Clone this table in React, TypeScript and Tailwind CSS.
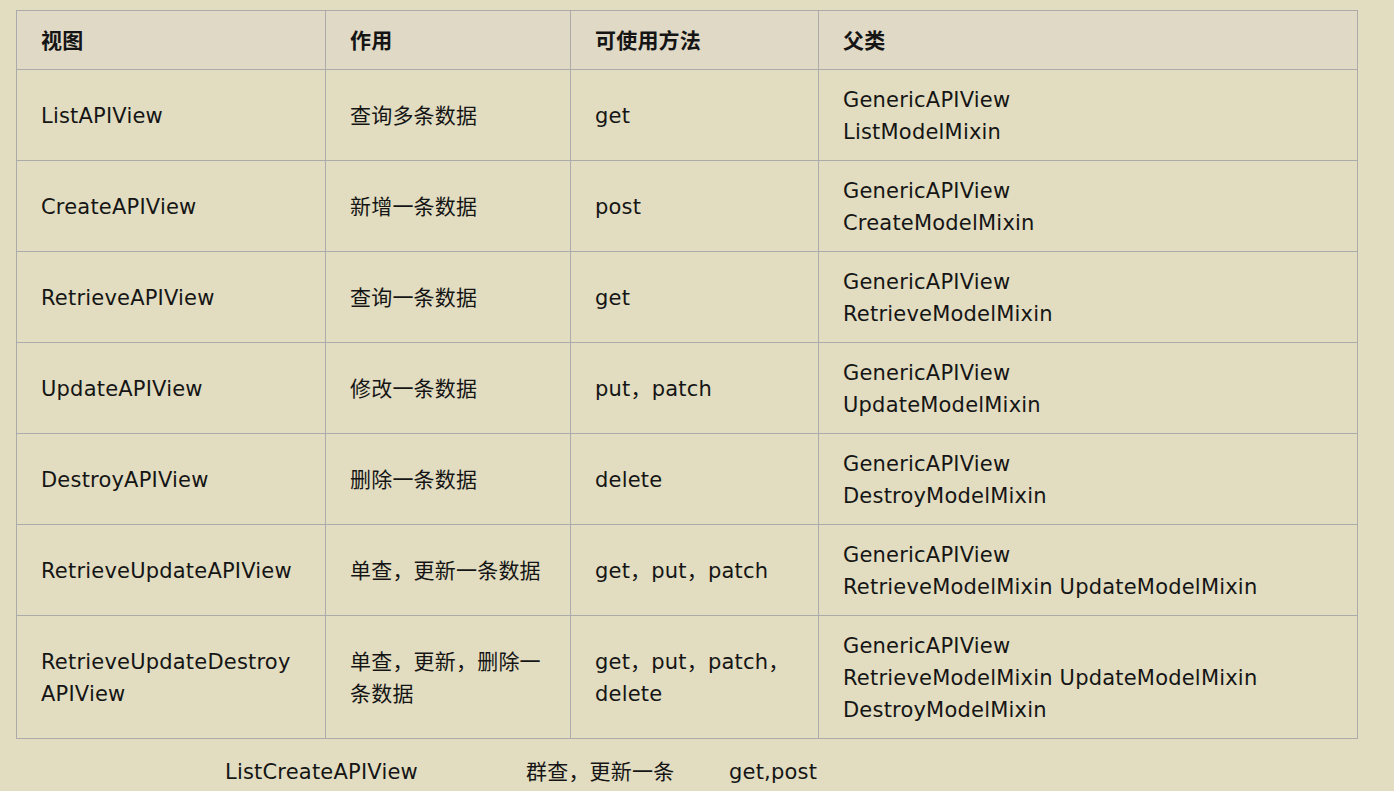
import React from "react";

type Row = { view: string[]; use: string[]; methods: string[]; parents: string[]; h: string };

const rows: Row[] = [
  { view: ["ListAPIView"], use: ["查询多条数据"], methods: ["get"], parents: ["GenericAPIView", "ListModelMixin"], h: "h-[91px]" },
  { view: ["CreateAPIView"], use: ["新增一条数据"], methods: ["post"], parents: ["GenericAPIView", "CreateModelMixin"], h: "h-[91px]" },
  { view: ["RetrieveAPIView"], use: ["查询一条数据"], methods: ["get"], parents: ["GenericAPIView", "RetrieveModelMixin"], h: "h-[91px]" },
  { view: ["UpdateAPIView"], use: ["修改一条数据"], methods: ["put，patch"], parents: ["GenericAPIView", "UpdateModelMixin"], h: "h-[91px]" },
  { view: ["DestroyAPIView"], use: ["删除一条数据"], methods: ["delete"], parents: ["GenericAPIView", "DestroyModelMixin"], h: "h-[91px]" },
  {
    view: ["RetrieveUpdateAPIView"],
    use: ["单查，更新一条数据"],
    methods: ["get，put，patch"],
    parents: ["GenericAPIView", "RetrieveModelMixin UpdateModelMixin"],
    h: "h-[91px]",
  },
  {
    view: ["RetrieveUpdateDestroy", "APIView"],
    use: ["单查，更新，删除一", "条数据"],
    methods: ["get，put，patch，", "delete"],
    parents: ["GenericAPIView", "RetrieveModelMixin UpdateModelMixin", "DestroyModelMixin"],
    h: "h-[123px]",
  },
];

const cell = "border border-[#ababab] px-6 pt-px align-middle text-left";

function Lines({ items }: { items: string[] }) {
  return (
    <>
      {items.map((t, i) => (
        <div key={i}>{t}</div>
      ))}
    </>
  );
}

export default function App() {
  return (
    <div className="min-h-screen bg-[#e2ddc1] text-[#151515] text-[21px] leading-8 tracking-[0.2px] font-['DejaVu_Sans','Noto_Sans_CJK_SC',sans-serif] pt-[10px]">
      <table className="ml-[16px] w-[1342px] table-fixed border-collapse">
        <colgroup>
          <col className="w-[309px]" />
          <col className="w-[245px]" />
          <col className="w-[248px]" />
          <col />
        </colgroup>
        <thead>
          <tr className="h-[59px] bg-[#e0d9c5] font-bold">
            <th className={cell}>视图</th>
            <th className={cell}>作用</th>
            <th className={cell}>可使用方法</th>
            <th className={cell}>父类</th>
          </tr>
        </thead>
        <tbody>
          {rows.map((r, i) => (
            <tr key={i} className={r.h}>
              <td className={cell}>
                <Lines items={r.view} />
              </td>
              <td className={cell}>
                <Lines items={r.use} />
              </td>
              <td className={cell}>
                <Lines items={r.methods} />
              </td>
              <td className={cell}>
                <Lines items={r.parents} />
              </td>
            </tr>
          ))}
        </tbody>
      </table>

      <div className="flex pl-[225px] mt-[17px]">
        <div className="w-[301px]">ListCreateAPIView</div>
        <div className="w-[203px]">群查，更新一条</div>
        <div>get,post</div>
      </div>
    </div>
  );
}
